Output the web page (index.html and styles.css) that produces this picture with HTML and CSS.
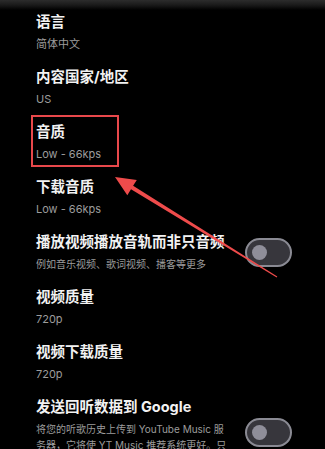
FILE: index.html
```html
<!DOCTYPE html>
<html lang="zh-CN">
<head>
<meta charset="utf-8">
<link rel="stylesheet" href="styles.css">
</head>
<body>
<div class="screen">
  <div class="topfade"></div>
  <div class="list">
    <div class="row">
      <div class="text"><div class="title">语言</div><div class="value">简体中文</div></div>
    </div>
    <div class="row">
      <div class="text"><div class="title">内容国家/地区</div><div class="value">US</div></div>
    </div>
    <div class="row">
      <div class="text"><div class="title">音质</div><div class="value">Low - 66kps</div></div>
    </div>
    <div class="row">
      <div class="text"><div class="title">下载音质</div><div class="value">Low - 66kps</div></div>
    </div>
    <div class="row">
      <div class="text"><div class="title">播放视频播放音轨而非只音频</div><div class="value desc">例如音乐视频、歌词视频、播客等更多</div></div>
      <div class="switch"><div class="knob"></div></div>
    </div>
    <div class="row">
      <div class="text"><div class="title">视频质量</div><div class="value">720p</div></div>
    </div>
    <div class="row">
      <div class="text"><div class="title">视频下载质量</div><div class="value">720p</div></div>
    </div>
    <div class="row">
      <div class="text"><div class="title">发送回听数据到 Google</div><div class="longdesc">将您的听歌历史上传到 YouTube Music 服<br>务器，它将使 YT Music 推荐系统更好。只<br>有您能看到这些数据。</div></div>
      <div class="switch"><div class="knob"></div></div>
    </div>
  </div>
  <div class="highlight"></div>
  <svg class="arrow" width="325" height="449" viewBox="0 0 325 449">
    <polygon points="115,177 136.8,179.9 133.1,185.8 277.3,276.6 276.7,277.4 131,189.2 127.3,195.2" fill="#ee4b4b"/>
  </svg>
</div>
</body>
</html>
```

FILE: styles.css
```css
html, body {
  margin: 0;
  padding: 0;
  background: #000;
}
.screen {
  position: relative;
  width: 325px;
  height: 449px;
  overflow: hidden;
  background: #000;
  font-family: Inter, "Noto Sans CJK SC", sans-serif;
}
.topfade {
  position: absolute;
  left: 0;
  top: 0;
  width: 100%;
  height: 10px;
  background: linear-gradient(#2c2c2c, #1a1a1a 50%, #000);
}
.list {
  padding: 5px 33px 0 36px;
}
.row {
  display: flex;
  align-items: center;
  gap: 14px;
  padding: 5.5px 0;
}
.text {
  flex: 1;
  min-width: 0;
}
.title {
  font-size: 14.5px;
  line-height: 22px;
  font-weight: 700;
  color: #f2f2f2;
  white-space: nowrap;
}
.value {
  font-size: 11px;
  line-height: 22px;
  color: #9c9c9c;
  white-space: nowrap;
}
.value.desc {
  font-size: 10px;
}
.longdesc {
  margin-top: 3px;
  font-size: 10px;
  line-height: 16px;
  color: #9c9c9c;
  white-space: nowrap;
}
.switch {
  flex: none;
  height: 25px;
  width: 38px;
  border: 2px solid #8a8a93;
  border-radius: 15px;
  background: #37363c;
  display: flex;
  align-items: center;
  padding-left: 5px;
  box-sizing: content-box;
}
.knob {
  width: 15px;
  height: 15px;
  border-radius: 50%;
  background: #8f8e99;
}
.highlight {
  position: absolute;
  left: 31px;
  top: 115px;
  width: 84px;
  height: 48px;
  border: 2px solid #e8484b;
}
.arrow {
  position: absolute;
  left: 0;
  top: 0;
}
```
